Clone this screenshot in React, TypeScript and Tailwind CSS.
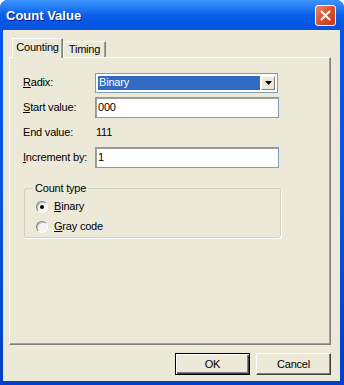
import React from "react";

function U({ children }: { children: React.ReactNode }) {
  return <span className="underline underline-offset-[1px]">{children}</span>;
}

function TextBox({ value }: { value: string }) {
  return (
    <div className="flex h-[21px] w-[184px] items-center border border-[#7f9db9] bg-white pl-[2px] shadow-[inset_1px_1px_0_#a0a0a0]">
      {value}
    </div>
  );
}

function Radio({ checked, children }: { checked?: boolean; children: React.ReactNode }) {
  return (
    <div className="flex h-[20px] items-center">
      <span className="ml-[9px] mr-[6px] flex h-[12px] w-[12px] items-center justify-center rounded-full border border-t-[#808080] border-l-[#808080] border-b-white border-r-white bg-[#f4f4f0] shadow-[inset_1px_1px_0_#c0c0c0]">
        {checked && <span className="h-[4px] w-[4px] rounded-full bg-black" />}
      </span>
      <span>{children}</span>
    </div>
  );
}

export default function App() {
  return (
    <div className="h-[385px] w-[344px] bg-white text-[11px] tracking-[-0.2px] text-black" style={{ fontFamily: '"Liberation Sans", Arial, sans-serif' }}>
      <div className="flex h-full flex-col rounded-t-[8px] bg-gradient-to-b from-[#0058ee] via-[#0a55e0] to-[#0040c8]">
        {/* title bar */}
        <div className="flex h-[30px] items-center justify-between rounded-t-[8px] bg-gradient-to-b from-[#3d95ff] via-[#0a5fe8] to-[#0451e0] pl-[6px] pr-[8px]">
          <span className="pt-[1px] text-[13px] font-bold tracking-normal text-white [text-shadow:1px_1px_0_#0a1e8a]">Count Value</span>
          <button className="flex h-[21px] w-[21px] items-center justify-center rounded-[3px] border border-white bg-gradient-to-br from-[#e98a6e] via-[#d8502c] to-[#c23a1a]">
            <svg width="11" height="11" viewBox="0 0 11 11">
              <path d="M1.5 1.5 L9.5 9.5 M9.5 1.5 L1.5 9.5" stroke="white" strokeWidth="2" strokeLinecap="round" />
            </svg>
          </button>
        </div>

        {/* client area */}
        <div className="mb-[4px] ml-[3px] mr-[4px] flex flex-1 flex-col bg-[#ece9d8] pl-[6px] pr-[9px] pt-[8px]">
          {/* tabs */}
          <div className="relative z-10 flex h-[19px] items-end pl-[3px]">
            <div className="-mb-px flex h-[20px] w-[51px] items-center justify-center border border-b-0 border-l-white border-t-white border-r-[#808080] bg-[#ece9d8] pb-[2px] shadow-[inset_-1px_0_0_#a0a0a0]">
              Counting
            </div>
            <div className="flex h-[16px] w-[43px] items-center justify-center border border-b-0 border-l-white border-t-white border-r-[#808080] pb-[1px] shadow-[inset_-1px_0_0_#a0a0a0]">
              Timing
            </div>
          </div>

          {/* tab panel */}
          <div className="h-[288px] border border-l-white border-t-white border-r-[#808080] border-b-[#808080] pl-[13px] pt-[14px] shadow-[inset_-1px_-1px_0_#a0a0a0]">
            <div className="flex flex-col gap-[4px]">
              <div className="flex h-[21px] items-center">
                <span className="w-[72px]"><U>R</U>adix:</span>
                <div className="flex h-[20px] w-[183px] items-center border border-[#7f9db9] bg-white p-[2px]">
                  <div className="flex h-full flex-1 items-center bg-[#316ac5] pl-[1px] text-white">Binary</div>
                  <div className="ml-[1px] flex h-full w-[14px] items-center justify-center border border-t-white border-l-white border-b-[#808080] border-r-[#808080] bg-[#ece9d8]">
                    <svg width="7" height="4" viewBox="0 0 7 4">
                      <path d="M0 0 H7 L3.5 4 Z" fill="black" />
                    </svg>
                  </div>
                </div>
              </div>
              <div className="flex h-[21px] items-center">
                <span className="w-[72px]"><U>S</U>tart value:</span>
                <TextBox value="000" />
              </div>
              <div className="flex h-[21px] items-center">
                <span className="w-[73px]">End value:</span>
                <span>111</span>
              </div>
              <div className="flex h-[21px] items-center">
                <span className="w-[72px]"><U>I</U>ncrement by:</span>
                <TextBox value="1" />
              </div>
            </div>

            <fieldset className="mt-[12px] ml-[1px] h-[58px] w-[257px] rounded-[3px] border border-[#d0d0bf] px-[2px] shadow-[1px_1px_0_#fff]">
              <legend className="ml-[6px] px-[2px]">Count type</legend>
              <Radio checked>
                <U>B</U>inary
              </Radio>
              <Radio>
                <U>G</U>ray code
              </Radio>
            </fieldset>
          </div>

          {/* buttons */}
          <div className="mt-[8px] flex justify-end gap-[6px]">
            <button className="flex h-[22px] w-[75px] items-center justify-center border border-black bg-[#ece9d8] shadow-[inset_1px_1px_0_#fff,inset_-1px_-1px_0_#404040,inset_-2px_-2px_0_#808080]">
              OK
            </button>
            <button className="flex h-[22px] w-[75px] items-center justify-center border border-t-white border-l-white border-b-[#404040] border-r-[#404040] bg-[#ece9d8] shadow-[inset_-1px_-1px_0_#808080]">
              Cancel
            </button>
          </div>
        </div>
      </div>
    </div>
  );
}
